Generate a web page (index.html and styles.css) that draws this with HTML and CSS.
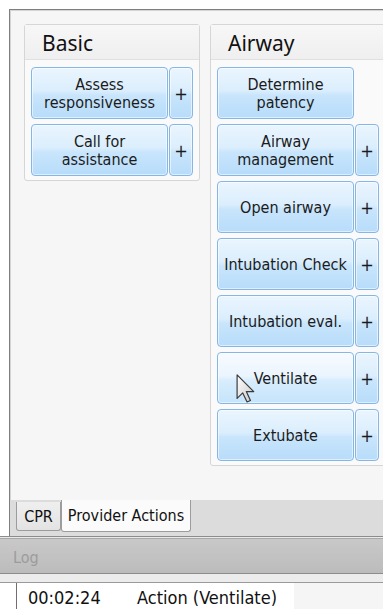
FILE: index.html
```html
<!DOCTYPE html>
<html>
<head>
<meta charset="utf-8">
<link rel="stylesheet" href="styles.css">
</head>
<body>
<div class="tabctl">
  <div class="page">
    <div class="group">
      <div class="group-head">Basic</div>
      <div class="group-body">
        <div class="row"><div class="btn">Assess<br>responsiveness</div><div class="btn plus">+</div></div>
        <div class="row"><div class="btn">Call for<br>assistance</div><div class="btn plus">+</div></div>
      </div>
    </div>
    <div class="group">
      <div class="group-head">Airway</div>
      <div class="group-body">
        <div class="row"><div class="btn">Determine<br>patency</div></div>
        <div class="row"><div class="btn">Airway<br>management</div><div class="btn plus">+</div></div>
        <div class="row"><div class="btn">Open airway</div><div class="btn plus">+</div></div>
        <div class="row"><div class="btn">Intubation Check</div><div class="btn plus">+</div></div>
        <div class="row"><div class="btn">Intubation eval.</div><div class="btn plus">+</div></div>
        <div class="row"><div class="btn hover">Ventilate</div><div class="btn plus">+</div></div>
        <div class="row"><div class="btn">Extubate</div><div class="btn plus">+</div></div>
      </div>
    </div>
  </div>
  <div class="tabs">
    <div class="tab tab-cpr">CPR</div>
    <div class="tab active">Provider Actions</div>
  </div>
</div>
<div class="log-head">Log</div>
<div class="log-sep"></div>
<div class="log-body">
  <div class="log-row"><span class="log-time">00:02:24</span><span class="log-text">Action (Ventilate)</span></div>
</div>
<svg class="cursor" width="19" height="29" viewBox="0 0 12.5 19.5">
  <defs>
    <linearGradient id="cg" x1="0" y1="0" x2="1" y2="1">
      <stop offset="0" stop-color="#ffffff"/>
      <stop offset="1" stop-color="#c9c9c9"/>
    </linearGradient>
  </defs>
  <path d="M0.6 0.6 L0.6 16.4 L4.4 12.7 L7.3 18.8 L9.6 17.8 L6.8 11.8 L11.8 11.8 Z" fill="url(#cg)" stroke="#3a3a3a" stroke-width="0.8" stroke-linejoin="round"/>
</svg>
</body>
</html>
```
FILE: styles.css
```css
* { box-sizing: border-box; }
html, body { margin: 0; }
body {
  width: 383px;
  height: 609px;
  overflow: hidden;
  background: #ffffff;
  position: relative;
  font-family: "DejaVu Sans Condensed", "DejaVu Sans", sans-serif;
  font-stretch: condensed;
  color: #1b1b1b;
}
.tabctl {
  margin: 9px 0 0 9px;
  border-top: 1px solid #7f7f7f;
  border-left: 1px solid #7f7f7f;
}
.page {
  height: 490px;
  background: #f6f6f6;
  box-shadow: inset 1px 1px 0 #d4d4d4;
  padding: 14px 0 0 14px;
  display: flex;
  gap: 10px;
  align-items: flex-start;
  overflow: hidden;
}
.group {
  flex: none;
  width: 176px;
  border: 1px solid #d6d6d6;
  border-radius: 3px;
  background: #fafafa;
}
.group-head {
  height: 35px;
  border-bottom: 1px solid #e0e0e0;
  background: linear-gradient(#f7f7f7, #efefef);
  padding: 3px 0 0 17px;
  font-family: "Noto Sans", sans-serif;
  font-stretch: normal;
  font-size: 21px;
  line-height: 31px;
  color: #111;
}
.group-body {
  padding: 7px 6px 4px 6px;
  display: flex;
  flex-direction: column;
  gap: 5px;
}
.row {
  display: flex;
  gap: 1px;
  height: 52px;
}
.btn {
  width: 137px;
  height: 52px;
  padding-top: 2px;
  border: 1px solid #86b6e6;
  border-radius: 4px;
  background: linear-gradient(#eaf5fe 0%, #dbeefd 45%, #c8e5fc 55%, #b7dcfa 100%);
  box-shadow: inset 0 0 0 1px rgba(255,255,255,0.55);
  display: flex;
  align-items: center;
  justify-content: center;
  text-align: center;
  font-size: 16px;
  line-height: 18px;
  color: #1b1b1b;
}
.btn.hover {
  background: linear-gradient(#f6fbff 0%, #ebf5fe 45%, #d8edfd 55%, #c5e4fb 100%);
}
.btn.plus {
  width: 24px;
  font-size: 18px;
}
.tabs {
  height: 36px;
  background: #dcdcdc;
  display: flex;
  align-items: flex-start;
  padding-left: 6px;
}
.tab {
  height: 29px;
  margin-top: 2px;
  border: 1px solid #9c9c9c;
  border-top: none;
  border-radius: 0 0 3px 3px;
  background: linear-gradient(#efefef, #e3e3e3);
  font-size: 16px;
  line-height: 30px;
  text-align: center;
  color: #111;
}
.tab-cpr { width: 45px; }
.tab.active {
  width: 130px;
  height: 32px;
  margin-top: 0;
  line-height: 32px;
  background: #fbfbfb;
}
.log-head {
  height: 38px;
  border-top: 1px solid #8c8c8c;
  border-bottom: 1px solid #8c8c8c;
  box-shadow: inset 0 1px 0 #e9e9e9, inset 0 2px 0 #a8a8a8;
  background: linear-gradient(#c9c9c9, #bcbcbc);
  padding: 7px 0 0 13px;
  font-size: 16px;
  line-height: 28px;
  color: #9c9c9c;
}
.log-sep {
  height: 9px;
  background: #ececec;
  border-bottom: 1px solid #9a9a9a;
}
.log-body {
  margin-left: 16px;
  border-left: 1px solid #6f6f6f;
  height: 40px;
  background: #f5f5f5;
}
.log-row {
  width: 277px;
  height: 30px;
  background: #ffffff;
  display: flex;
  font-size: 18px;
  line-height: 30px;
  padding-left: 11px;
  color: #111;
}
.log-time { width: 109px; }
.cursor {
  position: absolute;
  left: 236px;
  top: 374px;
}
```
